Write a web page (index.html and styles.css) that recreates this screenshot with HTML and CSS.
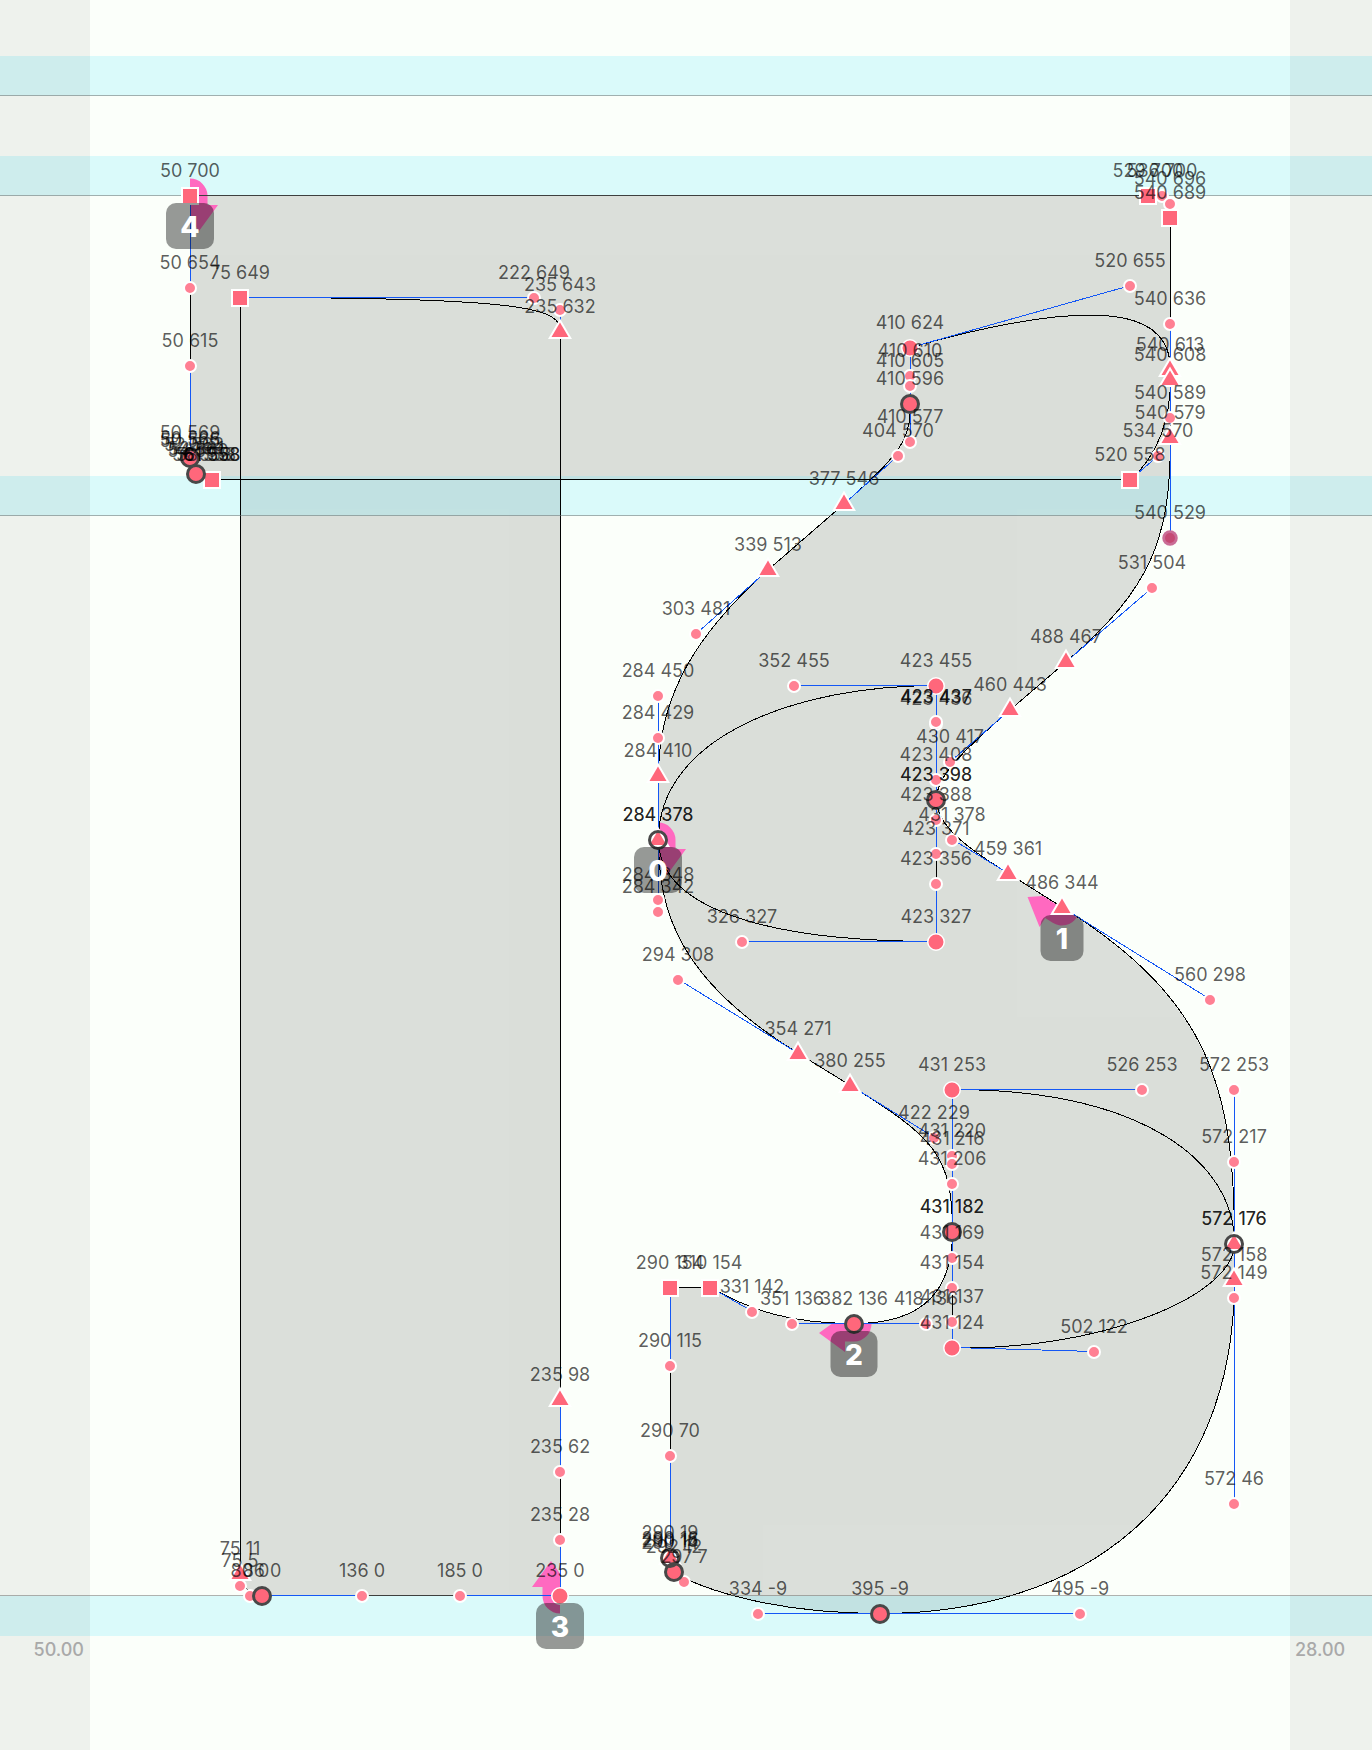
FILE: index.html
```html
<!DOCTYPE html>
<html lang="en">
<head>
<meta charset="utf-8">
<meta name="viewport" content="width=device-width, initial-scale=1">
<title>Glyph editor</title>
<link rel="stylesheet" href="styles.css">
</head>
<body>
<main class="editor">
<svg class="canvas" viewBox="0 0 1372 1750" role="img" aria-label="Glyph outline with point coordinates">
  <defs>
    <circle id="off" class="off" r="6"/>
    <circle id="smooth" class="smooth" r="8.25"/>
    <circle id="ringed" class="ringed" r="8.5"/>
    <circle id="ring" class="ring" r="8.5"/>
    <rect id="corner" class="corner" x="-8" y="-8" width="16" height="16"/>
    <path id="tangent" class="tangent" d="M0-9.5 8.5 5h-17z"/>
    <g id="hover"><circle class="hover-halo" r="7.75"/><circle class="hover-core" r="5"/></g>
    <path id="arrow" class="arrow" d="M0-17.5A17.5 17.5 0 0 1 17.5 0V9H28L9 35 0 22.5z"/>
  </defs>
  <g id="fills" class="fills" transform="translate(90 1596) scale(2 -2)"></g>
  <g class="zones">
    <rect x="0" y="56" width="1372" height="40"/>
    <rect x="0" y="156" width="1372" height="40"/>
    <rect x="0" y="476" width="1372" height="40"/>
    <rect x="0" y="1596" width="1372" height="40"/>
  </g>
  <g class="bearings">
    <rect x="0" y="0" width="90" height="1750"/>
    <rect x="1290" y="0" width="82" height="1750"/>
  </g>
  <g id="arrows"></g>
  <g id="outlines" class="outlines" transform="translate(90.5 1595.5) scale(2 -2)"></g>
  <path class="metrics" d="M0 95.5H1372M0 195.5H1372M0 515.5H1372M0 1595.5H1372"/>
  <path id="handles" class="handles" transform="translate(90.5 1595.5) scale(2 -2)"/>
  <g id="markers"></g>
  <g id="labels" class="labels"></g>
  <g id="badges" class="badges"></g>
  <text class="bearing-value bearing-left" x="84" y="1656">50.00</text>
  <text class="bearing-value" x="1295" y="1656">28.00</text>
</svg>
</main>
<script src="glyph.js"></script>
</body>
</html>
```
FILE: styles.css
```css
body {
  margin: 0;
  background: #fbfffa;
  font-family: Inter, "Liberation Sans", sans-serif;
}

.editor {
  width: 100%;
}

.canvas {
  display: block;
  width: 100%;
  height: auto;
}

.fills {
  fill: #000;
  opacity: 0.125;
}

.zones {
  fill: rgba(123, 237, 250, 0.26);
}

.bearings {
  fill: rgba(0, 0, 0, 0.05);
}

.outlines,
.handles {
  fill: none;
  stroke: #000;
  stroke-width: 1px;
  shape-rendering: crispEdges;
}

.outlines path,
.handles {
  vector-effect: non-scaling-stroke;
}

.handles {
  stroke: #1457f5;
}

.metrics {
  stroke: rgba(113, 115, 113, 0.55);
  shape-rendering: crispEdges;
}

.arrow {
  fill: #ff69c0;
}

.off {
  fill: #ff8093;
  stroke: #fff;
  stroke-width: 2px;
}

.smooth {
  fill: #ff677b;
  stroke: #fff;
  stroke-width: 1.5px;
}

.ringed {
  fill: #ff677b;
  stroke: #484848;
  stroke-width: 3px;
}

.ring {
  fill: none;
  stroke: #484848;
  stroke-width: 3px;
}

.corner {
  fill: #ff677b;
  stroke: #fff;
  stroke-width: 2px;
}

.tangent {
  fill: #ff677b;
  stroke: #fff;
  stroke-width: 4px;
  paint-order: stroke;
}

.hover-halo {
  fill: #ca6c96;
}

.hover-core {
  fill: #c54a74;
}

.labels {
  fill: rgba(0, 0, 0, 0.65);
  font-size: 18px;
  text-anchor: middle;
}

.badges rect {
  fill: rgba(0, 0, 0, 0.4);
}

.badges text {
  fill: #fff;
  font-size: 28px;
  font-weight: 800;
  text-anchor: middle;
}

.bearing-value {
  fill: #a9a9a9;
  font-size: 18px;
  font-weight: 500;
}

.bearing-left {
  text-anchor: end;
}
```
FILE: glyph.js
```js
// Font units: 600 wide, baseline at 0, y pointing up; one unit is two canvas units.
const SVG = 'http://www.w3.org/2000/svg';
const px = u => 90 + 2 * u;
const py = v => 1596 - 2 * v;

const contours = [
  'M50 700L529 700C536 700 540 696 540 689L540 608C540 589 534 570 520 558L61 558C58 558 55 559 53 561C51 563 50 566 50 569C50 615 50 654 50 700Z',
  'M75 649C222 649 235 643 235 632L235 98C235 62 235 28 235 0C185 0 136 0 86 0C80 0 75 5 75 11Z',
  'M410 624C520 655 540 636 540 613L540 579C540 529 531 504 488 467L460 443C430 417 423 408 423 398C423 388 431 378 459 361L486 344C560 298 572 253 572 176L572 158C572 46 495 -9 395 -9C334 -9 297 7 292 12C291 14 290 16 290 19C290 70 290 115 290 154L310 154C331 142 351 136 382 136C418 136 431 154 431 182C431 220 422 229 380 255L354 271C294 308 284 342 284 378L284 410C284 450 303 481 339 513L377 546C404 570 410 577 410 596C410 605 410 610 410 624Z',
  'M423 455C352 455 284 429 284 378C284 348 326 327 423 327C423 356 423 371 423 398C423 436 423 437 423 455Z',
  'M431 253C526 253 572 217 572 176C572 149 502 122 431 124C431 137 431 169 431 182C431 206 431 216 431 253Z'
];

// kind: on-curve shape or off-curve handle; then the position of each point
const points = {
  off: '50 654,50 615,536 700,540 696,540 636,540 589,534 570,520 655,222 649,235 643,235 62,235 28,185 0,136 0,80 0,75 5,410 610,410 605,410 577,404 570,303 481,284 450,284 429,284 348,284 342,352 455,326 327,294 308,423 436,423 437,423 408,423 388,423 371,423 356,430 417,431 378,531 504,560 298,572 253,572 217,572 149,572 46,526 253,502 122,422 229,431 220,431 216,431 206,431 169,431 154,431 137,418 136,351 136,331 142,290 115,290 70,297 7,334 -9,495 -9',
  corner: '50 700,529 700,540 689,520 558,61 558,75 649,290 154,310 154',
  tangent: '235 632,235 98,75 11,540 613,540 608,540 579,488 467,460 443,459 361,486 344,377 546,339 513,284 410,284 378,354 271,380 255,572 176,572 158,290 19',
  smooth: '410 624,423 455,423 327,431 253,431 124,235 0',
  ringed: '410 596,423 398,431 182,382 136,395 -9,86 0,50 569,53 561,292 12',
  ring: '284 378,572 176,290 19',
  hover: '540 529'
};

// labels of points too close together to have a marker of their own
const closeLabels = '50 566,50 565,52 563,54 560,56 558,58 558,61 558,290 16,290 15,290 14';
// nodes that two contours share
const sharedLabels = '423 398,284 378,431 182,572 176,423 437';

const starts = [
  { n: 0, at: '284 378', turn: 0, w: 48 },
  { n: 1, at: '486 344', turn: 122, w: 43 },
  { n: 2, at: '382 136', turn: 90, w: 47 },
  { n: 3, at: '235 0', turn: 180, w: 48 },
  { n: 4, at: '50 700', turn: 0, w: 48 }
];

function add(parent, tag, attrs, text) {
  const el = document.createElementNS(SVG, tag);
  for (const key in attrs) el.setAttribute(key, attrs[key]);
  if (text !== undefined) el.textContent = text;
  document.getElementById(parent).append(el);
}

function place(pair) {
  const [u, v] = pair.split(' ').map(Number);
  return [px(u), py(v)];
}

function label(pair) {
  const [x, y] = place(pair);
  add('labels', 'text', { x: x, y: y - 19 }, pair);
}

let handles = '';
for (const d of contours) {
  add('fills', 'path', { d });
  add('outlines', 'path', { d });
  let pen = '';
  for (const [, op, args] of d.matchAll(/([MLC])([^MLCZ]*)/g)) {
    const n = args.split(' ');
    if (op === 'C') {
      handles += `M${pen}L${n[0]} ${n[1]}M${n[2]} ${n[3]}L${n[4]} ${n[5]}`;
    }
    pen = n.slice(-2).join(' ');
  }
}
document.getElementById('handles').setAttribute('d', handles);

for (const kind in points) {
  for (const pair of points[kind].split(',')) {
    const [x, y] = place(pair);
    add('markers', 'use', { href: '#' + kind, x, y });
    if (kind !== 'ring') label(pair);
  }
}
closeLabels.split(',').forEach(label);
sharedLabels.split(',').forEach(label);

for (const s of starts) {
  const [x, y] = place(s.at);
  add('arrows', 'use', { href: '#arrow', transform: `translate(${x} ${y}) rotate(${s.turn})` });
  add('badges', 'rect', { x: x - s.w / 2, y: y + 7, width: s.w, height: 46, rx: 10 });
  add('badges', 'text', { x, y: y + 41 }, s.n);
}
```
